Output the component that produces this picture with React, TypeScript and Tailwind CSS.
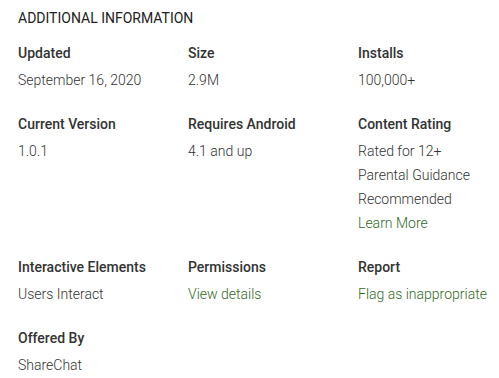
import React from "react"

type Item = { label: string; values: string[]; link?: string }

const rows: Item[][] = [
  [
    { label: "Updated", values: ["September 16, 2020"] },
    { label: "Size", values: ["2.9M"] },
    { label: "Installs", values: ["100,000+"] },
  ],
  [
    { label: "Current Version", values: ["1.0.1"] },
    { label: "Requires Android", values: ["4.1 and up"] },
    { label: "Content Rating", values: ["Rated for 12+", "Parental Guidance", "Recommended"], link: "Learn More" },
  ],
  [
    { label: "Interactive Elements", values: ["Users Interact"] },
    { label: "Permissions", values: [], link: "View details" },
    { label: "Report", values: [], link: "Flag as inappropriate" },
  ],
  [{ label: "Offered By", values: ["ShareChat"] }],
]

export default function App() {
  return (
    <div className="w-[499px] h-[378px] bg-white text-[#333] text-[14px] font-['Roboto',sans-serif] px-[18px] pt-[6px] overflow-hidden">
      <h2 className="uppercase leading-6 font-normal text-[14px] text-[#212121]">Additional Information</h2>
      <div className="mt-[11px] flex flex-col gap-5">
        {rows.map((row, i) => (
          <div key={i} className="grid grid-cols-[170px_170px_1fr]">
            {row.map((it) => (
              <div key={it.label} className="whitespace-nowrap">
                <div className="font-medium leading-6 text-[#333]">{it.label}</div>
                <div className="mt-[3px] leading-6 text-[#333] font-light">
                  {it.values.map((v) => (
                    <div key={v}>{v}</div>
                  ))}
                  {it.link && <div className="text-[#33691e]">{it.link}</div>}
                </div>
              </div>
            ))}
          </div>
        ))}
      </div>
    </div>
  )
}
